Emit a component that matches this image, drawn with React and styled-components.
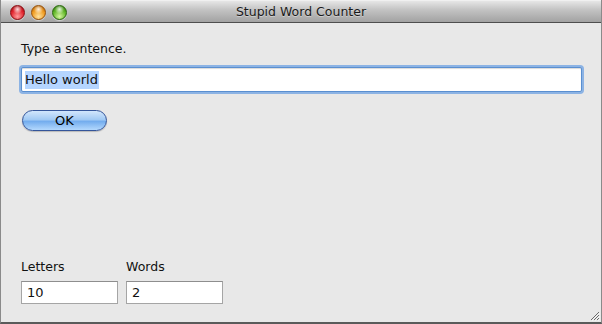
import React from 'react'
import styled, { createGlobalStyle } from 'styled-components'

const GlobalStyle = createGlobalStyle`
  html, body {
    margin: 0;
    padding: 0;
    background: #e8e8e8;
  }
  * { box-sizing: border-box; }
`;

function App() {
  return (
    <>
      <GlobalStyle />
      <Window>
        <TitleBar>
          <Lights>
            <Light color="red" />
            <Light color="orange" />
            <Light color="green" />
          </Lights>
          <Title>Stupid Word Counter</Title>
        </TitleBar>
        <Body>
          <Label>Type a sentence.</Label>
          <TextField>
            <Selected>Hello world</Selected>
          </TextField>
          <OkButton>OK</OkButton>
          <Spacer />
          <Counters>
            <Counter>
              <Label>Letters</Label>
              <CountBox>10</CountBox>
            </Counter>
            <Counter>
              <Label>Words</Label>
              <CountBox>2</CountBox>
            </Counter>
          </Counters>
          <Grip width="12" height="12" viewBox="0 0 12 12">
            <path d="M11 3 L3 11 M11 6 L6 11 M11 9 L9 11" stroke="#6a6a6a" strokeWidth="1" />
            <path d="M12 4 L4 12 M12 7 L7 12 M12 10 L10 12" stroke="#f4f4f4" strokeWidth="1" />
          </Grip>
        </Body>
      </Window>
    </>
  )
}

const lightColors = {
  red: ['#ff9c9c', '#e0232c', '#8e0d12'],
  orange: ['#ffe3a0', '#f09a1e', '#9a5208'],
  green: ['#d7f7a0', '#5fb526', '#2a6a0c'],
};

const Window = styled.div`
  width: 602px;
  height: 324px;
  display: flex;
  flex-direction: column;
  background: #e8e8e8;
  border-left: 1px solid #8a8a8a;
  border-right: 1px solid #8a8a8a;
  border-bottom: 2px solid #5a5a5a;
  font-family: "DejaVu Sans", "Liberation Sans", sans-serif;
  color: #111;
  overflow: hidden;
`;

const TitleBar = styled.div`
  position: relative;
  height: 23px;
  flex: none;
  display: flex;
  align-items: center;
  justify-content: center;
  background: linear-gradient(#e6e6e6, #c4c4c4 40%, #a2a2a2);
  border-top: 1px solid #f0f0f0;
  border-bottom: 1px solid #4e4e4e;
`;

const Lights = styled.div`
  position: absolute;
  left: 9px;
  top: 4px;
  display: flex;
  gap: 6px;
`;

const Light = styled.div`
  width: 15px;
  height: 15px;
  border-radius: 50%;
  border: 1px solid ${p => lightColors[p.color][2]};
  background:
    radial-gradient(circle at 50% 25%, rgba(255,255,255,0.85) 0, rgba(255,255,255,0) 40%),
    radial-gradient(circle at 50% 80%, ${p => lightColors[p.color][0]} 0, ${p => lightColors[p.color][1]} 55%, ${p => lightColors[p.color][2]} 100%);
  box-shadow: 0 1px 1px rgba(255,255,255,0.5);
`;

const Title = styled.div`
  font-size: 12.5px;
  color: #1a1a1a;
  text-shadow: 0 1px 0 rgba(255,255,255,0.4);
`;

const Body = styled.div`
  position: relative;
  flex: 1;
  display: flex;
  flex-direction: column;
  padding: 18px 18px 18px 20px;
`;

const Label = styled.div`
  font-size: 12.5px;
  line-height: 16px;
  color: #111;
  padding-left: ${p => (p.$indent ? 1 : 0)}px;
`;

const TextField = styled.div`
  margin-top: 10px;
  height: 25px;
  width: 561px;
  background: #fff;
  border: 1px solid #5a8fd0;
  border-radius: 2px;
  box-shadow: 0 0 0 2px #8cb3e4, inset 0 1px 1px rgba(0,0,0,0.15);
  display: flex;
  align-items: center;
  padding-left: 3px;
  font-size: 13px;
`;

const Selected = styled.span`
  background: #b5d5ff;
  line-height: 18px;
  padding-right: 1px;
`;

const OkButton = styled.div`
  margin-top: 18px;
  margin-left: 1px;
  width: 85px;
  height: 21px;
  border-radius: 11px;
  border: 1px solid #34559a;
  background: linear-gradient(#d2e6fc 0%, #a2caf4 45%, #74adee 55%, #b3d8fd 100%);
  box-shadow: 0 1px 1px rgba(0,0,0,0.2);
  display: flex;
  align-items: center;
  justify-content: center;
  font-size: 13px;
  color: #000;
`;

const Spacer = styled.div`
  flex: 1;
`;

const Counters = styled.div`
  display: flex;
  gap: 8px;
`;

const Counter = styled.div`
  display: flex;
  flex-direction: column;
  gap: 6px;
  margin-top: -1px;
`;

const CountBox = styled.div`
  width: 97px;
  height: 23px;
  background: #fff;
  border: 1px solid #a5a5a5;
  border-top-color: #8e8e8e;
  font-size: 13px;
  display: flex;
  align-items: center;
  padding-left: 5px;
`;

const Grip = styled.svg`
  position: absolute;
  right: 1px;
  bottom: 1px;
`;

export default App
